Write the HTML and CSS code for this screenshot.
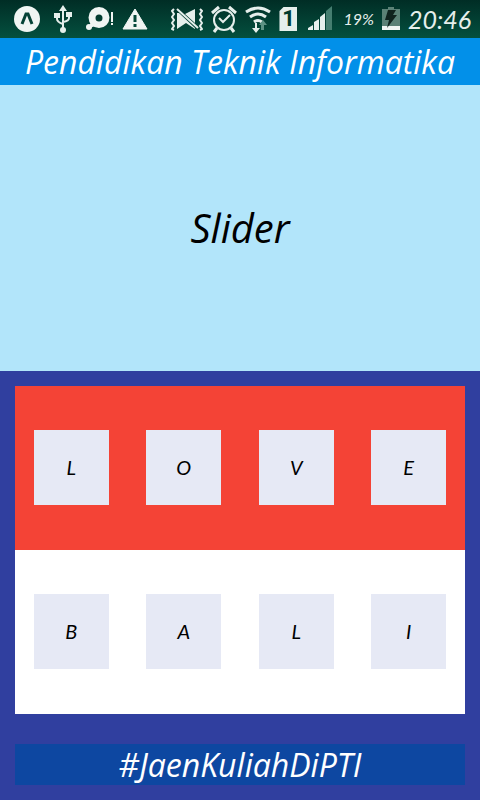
FILE: index.html
```html
<!DOCTYPE html>
<html lang="id">
<head>
<meta charset="utf-8">
<meta name="viewport" content="width=device-width, initial-scale=1">
<title>Pendidikan Teknik Informatika</title>
<link rel="stylesheet" href="styles.css">
</head>
<body>
<div class="status">
  <div class="status-left">
    <svg width="26" height="28" viewBox="0 0 26 28"><circle cx="13" cy="14" r="13" fill="#f0f5f3"/><path d="M8 19L12 9h2L18 19" fill="none" stroke="#044236" stroke-width="3"/></svg>
    <svg width="18" height="28" viewBox="0 0 18 28" fill="none" stroke="#e6efec" stroke-width="2"><path d="M9 4v20M3 10v4q0 3 6 5M15 9v4q0 3-6 4"/><path d="M9 0l4 6H5zM0 8h6v5H0zM12 7h6v5h-6z" fill="#e6efec" stroke="none"/><circle cx="9" cy="25" r="3" fill="#e6efec" stroke="none"/></svg>
    <svg width="28" height="28" viewBox="0 0 28 28" fill="#f0f5f3"><path fill-rule="evenodd" d="M13 2a10.500 10.500 0 1 1 0 21 10.500 10.500 0 0 1 0-21zm0 7.500a3.500 3.500 0 1 0 0 7 3.500 3.500 0 0 0 0-7z"/><circle cx="3" cy="22" r="3"/><path d="M4 18l5 3-5 2zM25 7h2v10h-2zM25 18h2v2h-2z"/></svg>
    <svg width="26" height="28" viewBox="0 0 26 28"><path d="M13 4L25 24H1z" fill="#f0f5f3" stroke="#f0f5f3" stroke-linejoin="round"/><path d="M13 10v7M13 19v3" stroke="#04483a" stroke-width="3"/></svg>
  </div>
  <div class="status-right">
    <svg width="32" height="28" viewBox="0 0 32 28" fill="none" stroke="#e6efec" stroke-width="2"><path d="M3 4L1 6l2 3-2 3 2 3-2 3 2 3-2 3 2 1M29 4l2 2-2 3 2 3-2 3 2 3-2 3 2 3-2 1"/><path d="M6 4l21 19"/><path d="M6 8h2l16 15v1l-9-6-9 6zM14 9l10-5v14z" fill="#e6efec" stroke="none"/></svg>
    <svg width="26" height="28" viewBox="0 0 26 28" fill="none" stroke="#e6efec" stroke-width="2"><circle cx="13" cy="15" r="10"/><path d="M8 13l4 4 7-7" /><path d="M1 8l7-6M25 8l-7-6M6 23l-3 4M20 23l3 4" stroke-width="3"/></svg>
    <svg width="26" height="28" viewBox="0 0 26 28" fill="none" stroke="#e6efec" stroke-width="3"><path d="M1 7q12-8 24 0M5 12q8-6 16 0M9 17q4-3 8 0"/><path d="M10 18v5H7l4 5 4-5h-3v-5z" fill="#e6efec" stroke="none"/><path d="M16 25v-5h-2l4-5 4 5h-3v5z" fill="#5d9284" stroke="none"/></svg>
    <span class="sim">1</span>
    <svg class="signal" width="24" height="28" viewBox="0 0 24 28" fill="#e6efec"><path d="M0 25v-2l5-3v5zM6 25v-8l5-3v11zM12 25V12l5-4v17z"/><path d="M18 25V6l6-5v24z" fill="#457e70"/></svg>
    <span class="percent">19%</span>
    <svg width="18" height="28" viewBox="0 0 18 28"><path d="M6 2h6v2h6v18H0V4h6z" fill="#5b8176"/><path d="M0 21h18v4H0z" fill="#f0f5f3"/><path d="M6 5h8l-3 5h4L5 23l2-8H3z" fill="#10231e"/></svg>
    <time class="clock">20:46</time>
  </div>
</div>
<h1 class="title">Pendidikan Teknik Informatika</h1>
<section class="slider">Slider</section>
<main class="panel">
  <div class="board">
    <div class="row row-red">
      <span class="tile">L</span><span class="tile">O</span><span class="tile">V</span><span class="tile">E</span>
    </div>
    <div class="row row-white">
      <span class="tile">B</span><span class="tile">A</span><span class="tile">L</span><span class="tile">I</span>
    </div>
  </div>
  <footer class="tag">#JaenKuliahDiPTI</footer>
</main>
</body>
</html>
```
FILE: styles.css
```css
* {
  box-sizing: border-box;
}

body {
  margin: 0;
  min-height: 100vh;
  display: flex;
  flex-direction: column;
  font-family: "Open Sans", Lato, sans-serif;
  font-style: italic;
  color: #000;
}

.status {
  height: 38px;
  padding: 0 9px 0 14px;
  display: flex;
  align-items: center;
  justify-content: space-between;
  background: linear-gradient(#002d25, #04503f);
  color: #e6efec;
  font-family: Lato, sans-serif;
}

.status svg {
  display: block;
  flex: none;
}

.status-left {
  display: flex;
  align-items: center;
  gap: 14px;
}

.status-left svg:last-child {
  margin-left: -6px;
}

.status-right {
  display: flex;
  align-items: center;
  gap: 8px;
}

.sim {
  width: 18px;
  height: 24px;
  background: #e6efec;
  color: #003a2e;
  font: bold 22px/24px Roboto, sans-serif;
  text-align: center;
  clip-path: polygon(4px 0, 100% 0, 100% 100%, 0 100%, 0 4px);
}

.signal {
  margin: 0 3px;
}

.percent {
  font-size: 16px;
  line-height: 24px;
}

.clock {
  font-size: 25px;
  line-height: 32px;
}

.title {
  margin: 0;
  padding: 4px 8px 3px;
  background: #0290e9;
  color: #fff;
  font-size: 32px;
  font-weight: 400;
  line-height: 40px;
  text-align: center;
}

.slider {
  flex: 2 0 0;
  display: flex;
  align-items: center;
  justify-content: center;
  background: #b2e5fa;
  font-size: 40px;
  line-height: 48px;
}

.panel {
  flex: 3 0 0;
  display: flex;
  flex-direction: column;
  background: #303f9f;
}

.board {
  flex: 1;
  margin: 15px;
  display: flex;
  flex-direction: column;
}

.row {
  flex: 1;
  display: flex;
  align-items: center;
  justify-content: space-around;
  padding-bottom: 1px;
}

.row-red {
  background: #f44336;
}

.row-white {
  background: #fff;
}

.tile {
  width: 75px;
  height: 75px;
  background: #e6e9f5;
  font-family: Lato, sans-serif;
  font-size: 20px;
  line-height: 75px;
  text-align: center;
}

.tag {
  margin: 15px;
  background: #0d47a1;
  color: #fff;
  font-size: 32px;
  line-height: 41px;
  text-align: center;
}
```
